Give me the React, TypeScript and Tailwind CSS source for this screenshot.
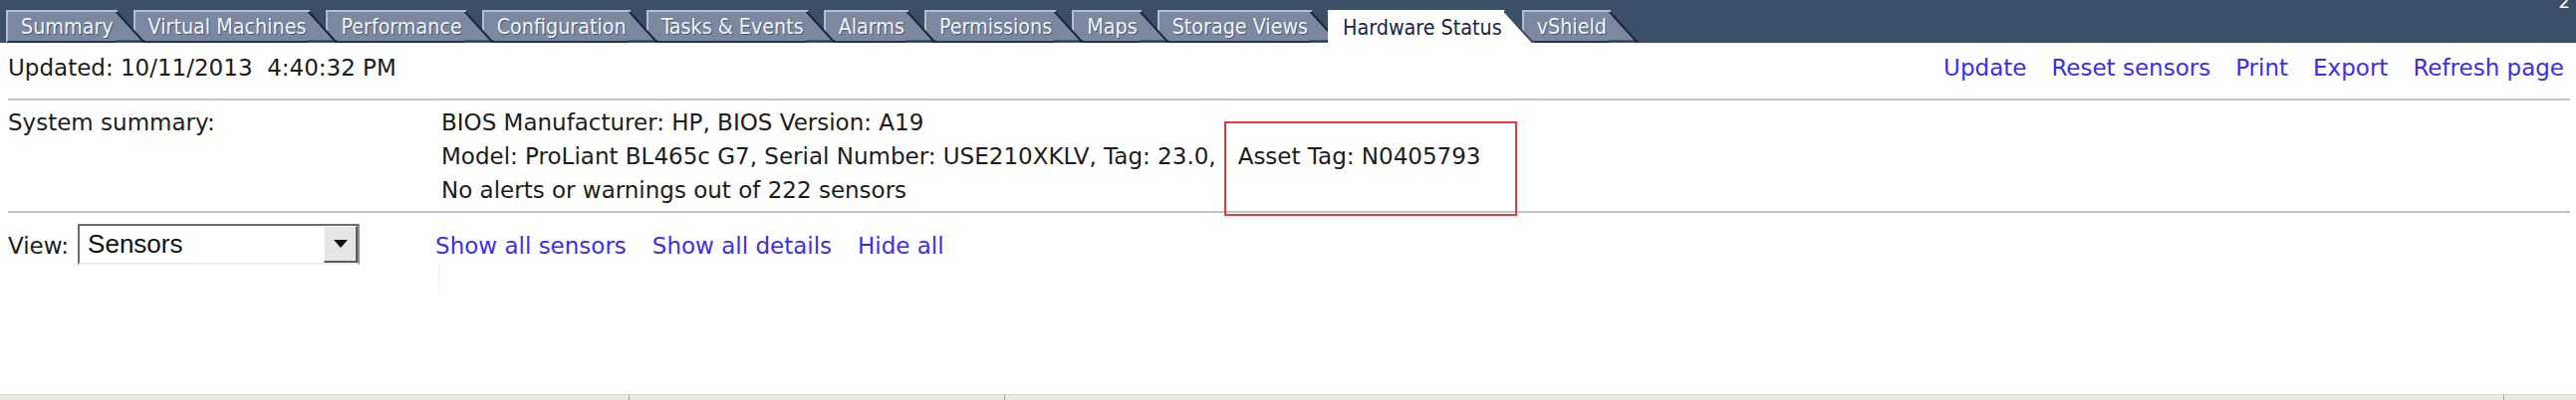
import * as React from 'react';

type Tab = { label: string; z: string; active?: boolean };

const tabs: Tab[] = [
    { label: 'Summary', z: 'z-[20]' },
    { label: 'Virtual Machines', z: 'z-[19]' },
    { label: 'Performance', z: 'z-[18]' },
    { label: 'Configuration', z: 'z-[17]' },
    { label: 'Tasks & Events', z: 'z-[16]' },
    { label: 'Alarms', z: 'z-[15]' },
    { label: 'Permissions', z: 'z-[14]' },
    { label: 'Maps', z: 'z-[13]' },
    { label: 'Storage Views', z: 'z-[12]' },
    { label: 'Hardware Status', z: 'z-[30]', active: true },
    { label: 'vShield', z: 'z-[10]' },
];

const body = { fontFamily: '"DejaVu Sans", Verdana, sans-serif' };
const tabFont = { fontFamily: '"DejaVu Sans Condensed", "DejaVu Sans", sans-serif' };

function TabItem({ tab }: { tab: Tab }) {
    const fill = tab.active ? '#ffffff' : '#7b889f';
    return (
        <div className={`relative flex h-[33px] -mr-[12px] ${tab.z}`}>
            <div
                className={`flex items-center pl-[13px] pr-[2px] border-l-2 border-t-2 ${
                    tab.active
                        ? 'bg-white border-white text-[#1b1f4a]'
                        : 'bg-[#7b889f] border-[#b4bdce] text-[#f1f3f7] [text-shadow:1px_1px_0_#4b5872] border-b-2 border-b-[#24334a]'
                }`}
            >
                <span className="text-[21.3px] leading-none font-stretch-condensed whitespace-nowrap" style={tabFont}>
                    {tab.label}
                </span>
            </div>
            <svg width="30" height="33" viewBox="0 0 30 33" className="block shrink-0">
                <polygon points="0,0 0,33 30,33" fill={fill} />
                {!tab.active && <line x1="0" y1="31.5" x2="30" y2="31.5" stroke="#24334a" strokeWidth="2" />}
                <line x1="0" y1="1" x2="29" y2="33" stroke={tab.active ? '#3a4758' : '#1b2535'} strokeWidth="2" />
                {!tab.active && <line x1="0" y1="1" x2="2" y2="1" stroke="#b4bdce" strokeWidth="2" />}
            </svg>
        </div>
    );
}

export default function App() {
    return (
        <div className="relative w-[2586px] h-[402px] bg-white overflow-hidden flex flex-col text-[#1c1c1c]" style={body}>
            {/* tab strip */}
            <div className="relative h-[43px] shrink-0 bg-[#3b5068] flex items-end pl-[6px]">
                {tabs.map(t => (
                    <TabItem key={t.label} tab={t} />
                ))}
                <span className="absolute right-[6px] -top-[12px] text-[18px] text-white" style={body}>2</span>
            </div>

            {/* updated row */}
            <div className="flex items-center justify-between h-[33px] mt-[9px] pl-[8px] pr-[12px] text-[23px]">
                <span className="whitespace-pre">Updated: 10/11/2013  4:40:32 PM</span>
                <div className="flex gap-[25px] text-[#3b2ef2]">
                    <span>Update</span>
                    <span>Reset sensors</span>
                    <span>Print</span>
                    <span>Export</span>
                    <span>Refresh page</span>
                </div>
            </div>

            <div className="mt-[14px] ml-[8px] mr-[6px] border-t-2 border-[#c4c4c4]" />

            {/* system summary */}
            <div className="grid grid-cols-[435px_1fr] pl-[8px] pt-[5px] text-[23px] leading-[34px]">
                <span>System summary:</span>
                <div className="flex flex-col">
                    <span>BIOS Manufacturer: HP, BIOS Version: A19</span>
                    <span className="whitespace-pre">
                        Model: ProLiant BL465c G7, Serial Number: USE210XKLV, Tag: 23.0,<span className="ml-[22px]">Asset Tag: N0405793</span>
                    </span>
                    <span>No alerts or warnings out of 222 sensors</span>
                </div>
            </div>

            <div className="mt-[4px] ml-[8px] mr-[6px] border-t-2 border-[#c4c4c4]" />

            {/* view row */}
            <div className="flex items-center mt-[11px] pl-[8px] text-[23px]">
                <span className="translate-y-[2px]">View:</span>
                <div className="ml-[9px] w-[283px] h-[41px] flex border-2 border-t-[#6b6b6b] border-l-[#6b6b6b] border-r-[#8a8a8a] border-b-[#ededed] bg-white">
                    <span className="flex-1 pl-[8px] flex items-center text-[26px] text-[#111]" style={{ fontFamily: '"Liberation Sans", Arial, sans-serif' }}>
                        Sensors
                    </span>
                    <div className="w-[34px] flex items-center justify-center bg-[#e6e6e6] border-l border-t border-[#fafafa] border-r-2 border-b-2 border-r-[#5c5c5c] border-b-[#5c5c5c]">
                        <svg width="14" height="8" viewBox="0 0 14 8">
                            <polygon points="0,0 14,0 7,8" fill="#111" />
                        </svg>
                    </div>
                </div>
                <div className="ml-[76px] flex gap-[26px] text-[#3b2ef2] translate-y-[2px]">
                    <span>Show all sensors</span>
                    <span>Show all details</span>
                    <span>Hide all</span>
                </div>
            </div>
            <div className="ml-[440px] w-px h-[24px] bg-[#ececec]" />

            <div className="flex-1" />

            {/* status strip */}
            <div className="h-[6px] shrink-0 flex bg-[#ebe8e0] border-t border-[#dcd8ce]">
                <div className="w-[632px] border-r border-[#a9a498]" />
                <div className="w-[377px] border-r border-[#a9a498]" />
                <div className="w-[1505px] border-r border-[#a9a498]" />
                <div className="flex-1" />
            </div>

            {/* annotation box */}
            <div className="absolute left-[1229px] top-[122px] w-[294px] h-[95px] border-2 border-[#e5393b]" />
        </div>
    );
}
